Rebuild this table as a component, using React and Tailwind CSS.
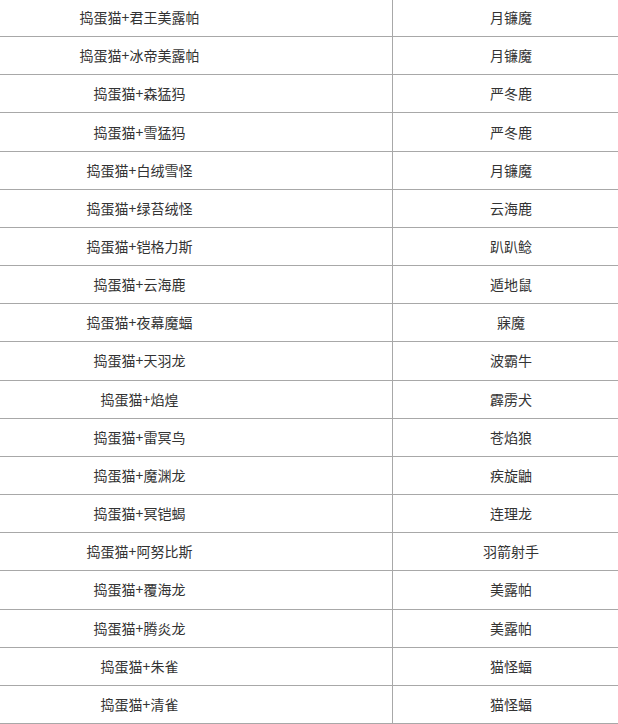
import React from "react";

const rows = [
  ["捣蛋猫+君王美露帕", "月镰魔"],
  ["捣蛋猫+冰帝美露帕", "月镰魔"],
  ["捣蛋猫+森猛犸", "严冬鹿"],
  ["捣蛋猫+雪猛犸", "严冬鹿"],
  ["捣蛋猫+白绒雪怪", "月镰魔"],
  ["捣蛋猫+绿苔绒怪", "云海鹿"],
  ["捣蛋猫+铠格力斯", "趴趴鲶"],
  ["捣蛋猫+云海鹿", "遁地鼠"],
  ["捣蛋猫+夜幕魔蝠", "寐魔"],
  ["捣蛋猫+天羽龙", "波霸牛"],
  ["捣蛋猫+焰煌", "霹雳犬"],
  ["捣蛋猫+雷冥鸟", "苍焰狼"],
  ["捣蛋猫+魔渊龙", "疾旋鼬"],
  ["捣蛋猫+冥铠蝎", "连理龙"],
  ["捣蛋猫+阿努比斯", "羽箭射手"],
  ["捣蛋猫+覆海龙", "美露帕"],
  ["捣蛋猫+腾炎龙", "美露帕"],
  ["捣蛋猫+朱雀", "猫怪蝠"],
  ["捣蛋猫+清雀", "猫怪蝠"],
];

export default function App() {
  return (
    <div
      className="w-[618px] h-[724px] overflow-hidden bg-white text-[14px] text-[#333]"
      style={{ fontFamily: '"Noto Sans CJK SC", "Liberation Sans", sans-serif' }}
    >
      <div className="-mt-[1px]">
        {rows.map(([pair, result], i) => (
          <div
            key={i}
            className="flex h-[38.17px] border-b border-[#a8a8a8]"
          >
            <div className="w-[393px] flex items-center justify-center pr-[113px] border-r border-[#a8a8a8]">
              {pair}
            </div>
            <div className="flex-1 flex items-center justify-center pl-[11px]">
              {result}
            </div>
          </div>
        ))}
      </div>
    </div>
  );
}
